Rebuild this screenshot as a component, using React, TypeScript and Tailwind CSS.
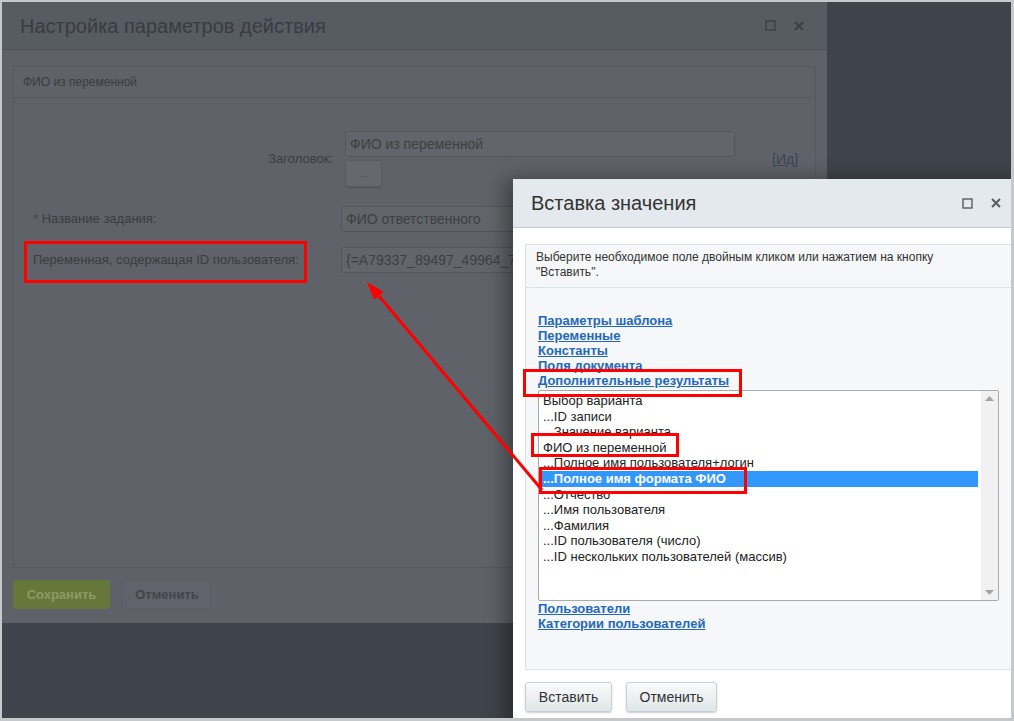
import React from 'react';

const font = { fontFamily: '"Liberation Sans", Arial, sans-serif' };

const items = [
  'Выбор варианта',
  '...ID записи',
  '...Значение варианта',
  'ФИО из переменной',
  '...Полное имя пользователя+логин',
  '...Полное имя формата ФИО',
  '...Отчество',
  '...Имя пользователя',
  '...Фамилия',
  '...ID пользователя (число)',
  '...ID нескольких пользователей (массив)',
];

function WindowIcons({ color }: { color: string }) {
  return (
    <div className="flex items-center gap-[18px]">
      <svg width="11" height="11" viewBox="0 0 11 11">
        <rect x="1" y="1" width="9" height="9" fill="none" stroke={color} strokeWidth="1.4" />
      </svg>
      <svg width="10" height="10" viewBox="0 0 10 10">
        <path d="M1 1L9 9M9 1L1 9" stroke={color} strokeWidth="2" />
      </svg>
    </div>
  );
}

function SettingsDialog() {
  return (
    <div className="absolute left-0 top-0 w-[825px] h-[621px] bg-[#5e6167] flex flex-col">
      <div className="h-[48px] shrink-0 bg-[#575b62] border-b border-[#4c4f55] flex items-center justify-between pl-[18px] pr-[23px]">
        <span className="text-[20px] text-[#393c41]">Настройка параметров действия</span>
        <WindowIcons color="#3c3f45" />
      </div>
      <div className="px-[11px] pt-[16px]">
        <div className="h-[502px] border border-[#55585e] bg-[#5f6268] flex flex-col">
          <div className="h-[31px] border-b border-[#56595f] flex items-center pl-[9px] text-[12px] text-[#3a3d42]">
            ФИО из переменной
          </div>
          <div className="pt-[33px] flex flex-col text-[13px] text-[#3a3d42]">
            <div className="flex items-center">
              <div className="w-[319px] text-right">Заголовок:</div>
              <div className="ml-[12px] flex flex-col gap-[3px]">
                <div className="w-[390px] h-[26px] rounded-[3px] border border-[#52555b] bg-[#626569] flex items-center px-[4px] text-[14px] text-[#3d4045]">
                  ФИО из переменной
                </div>
                <div className="w-[37px] h-[27px] rounded-[3px] border border-[#585b61] bg-[#65686e] shadow-[0_1px_1px_rgba(0,0,0,0.15)] flex items-center justify-center text-[11px] text-[#45484e]">
                  ...
                </div>
              </div>
              <div className="ml-[37px] text-[14px] text-[#3b4658]">[<span className="underline">Ид</span>]</div>
            </div>
            <div className="mt-[19px] flex items-center pl-[19px]">
              <div className="w-[308px]"><span className="text-[#444]">*</span> Название задания:</div>
              <div className="w-[200px] h-[26px] rounded-[3px] border border-[#52555b] bg-[#626569] flex items-center px-[4px] whitespace-nowrap text-[14px] text-[#3d4045]">
                ФИО ответственного
              </div>
            </div>
            <div className="mt-[15px] flex items-center pl-[19px]">
              <div className="w-[308px]">Переменная, содержащая ID пользователя:</div>
              <div className="w-[200px] h-[26px] rounded-[3px] border border-[#52555b] bg-[#626569] flex items-center px-[4px] whitespace-nowrap text-[14px] text-[#3d4045]">
                {'{=A79337_89497_49964_79'}
              </div>
            </div>
          </div>
        </div>
        <div className="mt-[12px] flex gap-[12px] text-[13px] font-bold">
          <div className="w-[97px] h-[29px] rounded-[3px] bg-[#65773a] flex items-center justify-center text-[#8e9a66]">
            Сохранить
          </div>
          <div className="w-[90px] h-[29px] rounded-[3px] bg-[#60636b] border border-[#5b5e65] flex items-center justify-center text-[#43464d]">
            Отменить
          </div>
        </div>
      </div>
    </div>
  );
}

function InsertDialog() {
  return (
    <div className="absolute left-[511px] top-[177px] w-[520px] h-[560px] bg-white flex flex-col shadow-[-8px_0_18px_rgba(0,0,0,0.35)]">
      <div className="h-[49px] shrink-0 bg-[#e3e9ec] border-b border-[#c5ccd0] flex items-center pl-[18px]">
        <span className="text-[20px] text-[#333]">Вставка значения</span>
        <div className="ml-[266px]">
          <WindowIcons color="#535c69" />
        </div>
      </div>
      <div className="pl-[12px] pt-[16px]">
        <div className="h-[426px] border border-[#dce3e6] bg-[#f5f7f8] flex flex-col">
          <div className="border-b border-[#dce3e6] pl-[10px] pt-[5px] pb-[7px] text-[12px] leading-[15px] text-[#333]">
            <div>Выберите необходимое поле двойным кликом или нажатием на кнопку</div>
            <div>"Вставить".</div>
          </div>
          <div className="pl-[12px] pt-[25px] text-[13px] font-bold leading-[15px] text-[#2468be]">
            <div className="underline">Параметры шаблона</div>
            <div className="underline">Переменные</div>
            <div className="underline">Константы</div>
            <div className="underline">Поля документа</div>
            <div className="underline">Дополнительные результаты</div>
            <div className="mt-[2px] w-[461px] h-[211px] rounded-[2px] border border-[#aaaaaa] bg-white flex font-normal text-[#222]">
              <div className="flex-1 pt-[2px] pl-[1px] leading-[15.5px]">
                {items.map((it, i) =>
                  i === 5 ? (
                    <div key={i} className="w-[438px] h-[16px] bg-[#3297fd] text-white font-bold pl-[3px] flex items-center">
                      {it}
                    </div>
                  ) : (
                    <div key={i} className="pl-[3px]">{it}</div>
                  )
                )}
              </div>
              <div className="w-[17px] bg-[#f1f1f1] flex flex-col items-center justify-between py-[5px]">
                <svg width="9" height="5" viewBox="0 0 9 5"><path d="M0 5L4.5 0L9 5Z" fill="#a3a3a3" /></svg>
                <svg width="9" height="5" viewBox="0 0 9 5"><path d="M0 0L4.5 5L9 0Z" fill="#a3a3a3" /></svg>
              </div>
            </div>
            <div className="underline">Пользователи</div>
            <div className="underline">Категории пользователей</div>
          </div>
        </div>
        <div className="mt-[12px] flex gap-[14px] text-[14px] text-[#333]">
          <div className="w-[87px] h-[30px] rounded-[3px] border border-[#c8d0d4] bg-gradient-to-b from-[#f9fbfb] to-[#dfe5e8] shadow-[0_1px_2px_rgba(0,0,0,0.2)] flex items-center justify-center">
            Вставить
          </div>
          <div className="w-[91px] h-[30px] rounded-[3px] border border-[#c8d0d4] bg-gradient-to-b from-[#f9fbfb] to-[#dfe5e8] shadow-[0_1px_2px_rgba(0,0,0,0.2)] flex items-center justify-center">
            Отменить
          </div>
        </div>
      </div>
    </div>
  );
}

function Annotations() {
  return (
    <svg className="absolute left-0 top-0 pointer-events-none" width="1014" height="721" viewBox="0 0 1014 721">
      <g fill="none" stroke="#ff0000" strokeWidth="3">
        <rect x="25.5" y="242.5" width="280" height="39" />
        <rect x="524.5" y="370.5" width="216" height="25" />
        <rect x="532.5" y="434.5" width="145" height="21" />
        <rect x="540.5" y="468.5" width="205" height="24" />
        <line x1="542" y1="490" x2="379" y2="296" />
      </g>
      <path d="M367 282L383.5 292L374 300Z" fill="#ff0000" />
    </svg>
  );
}

export default function App() {
  return (
    <div className="relative w-[1014px] h-[721px] bg-[#c5c9cc] pt-[2px] pl-[2px] pr-[3px] pb-[3px] overflow-hidden" style={font}>
      <div className="relative w-full h-full bg-[#3f434b] overflow-hidden">
        <SettingsDialog />
        <InsertDialog />
      </div>
      <Annotations />
    </div>
  );
}
